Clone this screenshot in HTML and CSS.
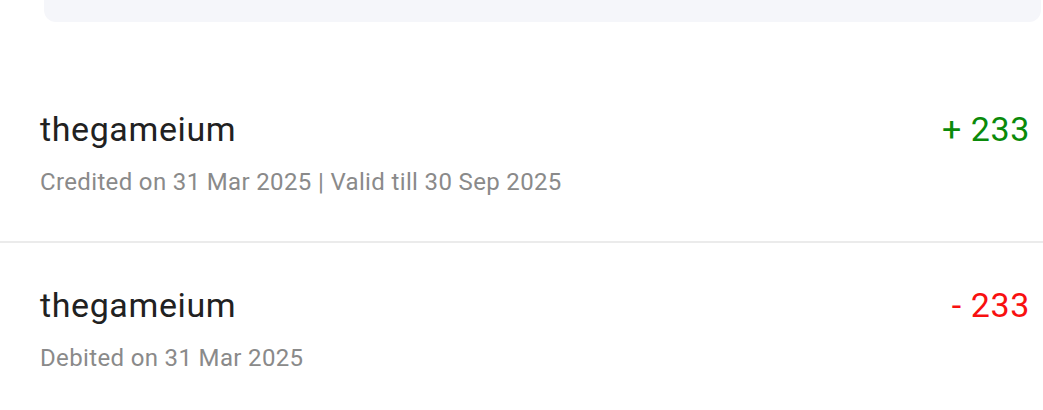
FILE: index.html
```html
<!DOCTYPE html>
<html>

<head>
  <meta name="viewport" content="width=device-width, initial-scale=1.0">
  <title>Coins History</title>
  <link rel="stylesheet" href="styles.css">
</head>

<body>
  <!-- Summary card (scrolled, only the bottom edge is visible) -->
  <div class="summary-card"></div>

  <div class="history">
    <div class="entry">
      <div class="entry-info">
        <div class="entry-title">thegameium</div>
        <div class="entry-meta">Credited on 31 Mar 2025 | Valid till 30 Sep 2025</div>
      </div>
      <div class="entry-amount credit">+ 233</div>
    </div>

    <div class="entry">
      <div class="entry-info">
        <div class="entry-title">thegameium</div>
        <div class="entry-meta">Debited on 31 Mar 2025</div>
      </div>
      <div class="entry-amount debit">- 233</div>
    </div>
  </div>
</body>

</html>
```

FILE: styles.css
```css
body {
  font-family: Roboto, "Noto Sans", Arial, sans-serif;
  margin: 0;
  padding: 0;
  background-color: #ffffff;
  color: #202020;
  overflow: hidden;
}

.summary-card {
  height: 22px;
  margin: 0 2px 45px 44px;
  background-color: #f5f6fa;
  border-radius: 0 0 12px 12px;
}

.entry {
  display: flex;
  justify-content: space-between;
  align-items: flex-start;
  padding: 42px 13px 45px 40px;
}

.entry + .entry {
  border-top: 2px solid #ebebeb;
}

.entry-info {
  display: flex;
  flex-direction: column;
  gap: 19px;
}

.entry-title {
  font-size: 34px;
  line-height: 40px;
  letter-spacing: 0.6px;
  color: #212121;
}

.entry-meta {
  font-size: 24px;
  line-height: 28px;
  letter-spacing: 0.35px;
  color: #8a8a8a;
}

.entry-amount {
  font-size: 34px;
  line-height: 40px;
  letter-spacing: 0.6px;
}

.credit {
  color: #0a8a0a;
}

.debit {
  color: #f81010;
}
```
